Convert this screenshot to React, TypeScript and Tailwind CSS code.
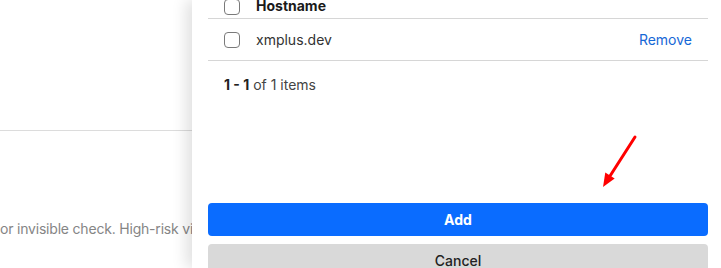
import React from "react";

function Checkbox() {
  return <div className="w-4 h-4 rounded-[4px] border border-[#7a7a7a] bg-white shrink-0" />;
}

export default function App() {
  return (
    <div
      className="relative w-[721px] h-[268px] overflow-hidden bg-white"
      style={{ fontFamily: "Inter, 'Noto Sans', sans-serif" }}
    >
      {/* background page */}
      <div className="w-[192px]">
        <div className="h-[130px]" />
        <div className="border-t border-[#dcdcdc]" />
        <div className="mt-[88px] whitespace-nowrap text-[14px] tracking-[-0.2px] leading-5 text-[#858585]">
          or invisible check. High-risk visitors will be challenged
        </div>
      </div>

      {/* drawer */}
      <div className="absolute left-[192px] top-0 w-[529px] h-[268px] bg-white shadow-[-6px_0_14px_rgba(0,0,0,0.12)] pl-4 pr-[13px]">
        <div className="mt-[-4px] h-[23px] border-b border-[#d6d6d6] flex items-center pl-4 gap-4">
          <Checkbox />
          <span className="text-[14px] font-bold text-[#1a1a1a] leading-5 -mt-[3px]">Hostname</span>
        </div>
        <div className="h-[42px] border-b border-[#d6d6d6] flex items-center pl-4 pr-4 gap-4">
          <Checkbox />
          <span className="text-[14px] text-[#333] leading-5">xmplus.dev</span>
          <span className="ml-auto text-[14px] text-[#1668d6] leading-5">Remove</span>
        </div>
        <div className="mt-[14px] pl-4 text-[14px] leading-5 text-[#444]">
          <span className="font-bold text-[#222]">1 - 1</span> of 1 items
        </div>
        <div className="mt-[108px] flex flex-col gap-2">
          <button className="h-[33px] w-full rounded-[4px] bg-[#0a6cff] text-white text-[14px] font-bold">
            Add
          </button>
          <button className="h-[33px] w-full rounded-[4px] bg-[#d9d9d9] text-[#222] text-[14px] font-medium">
            Cancel
          </button>
        </div>
      </div>

      {/* annotation arrow */}
      <svg className="absolute left-[595px] top-[130px]" width="45" height="62" viewBox="0 0 45 62">
        <line x1="40" y1="7" x2="15" y2="46" stroke="#ff0000" strokeWidth="3" strokeLinecap="round" />
        <polygon points="8,57 10.3,42.6 19.7,48.6" fill="#ff0000" />
      </svg>
    </div>
  );
}
